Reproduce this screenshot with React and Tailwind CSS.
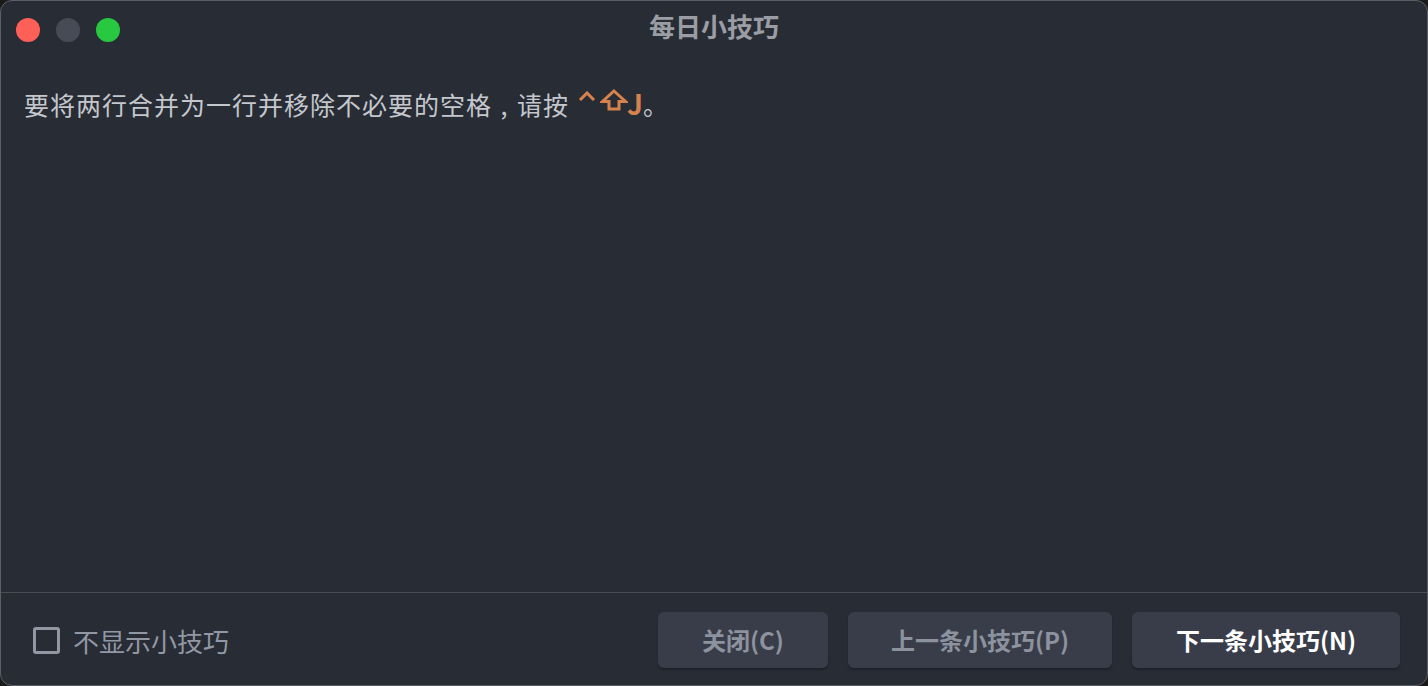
import React, { useState } from 'react';

const cjk = { fontFamily: '"Noto Sans CJK SC", "Noto Sans", sans-serif' };

const TrafficLights = () => (
  <div className="flex items-center gap-4 pt-[3px]">
    <span className="w-6 h-6 rounded-full bg-[#fe5f57]" />
    <span className="w-6 h-6 rounded-full bg-[#474b55]" />
    <span className="w-6 h-6 rounded-full bg-[#28c840]" />
  </div>
);

// ^ control key glyph
const CtrlKey = () => (
  <svg width="18" height="10" viewBox="0 0 18 10" className="inline-block ml-[9px] align-[14px]">
    <path d="M2 9 L9 2 L16 9" fill="none" stroke="#d5824c" strokeWidth="3" strokeLinejoin="miter" />
  </svg>
);

// ⇧ shift key glyph
const ShiftKey = () => (
  <svg width="28" height="22" viewBox="0 0 28 22" className="inline-block ml-[4px] align-[4px]">
    <path
      d="M14 2 L25.5 12.5 L19 12.5 L19 20 L9 20 L9 12.5 L2.5 12.5 Z"
      fill="none"
      stroke="#d5824c"
      strokeWidth="3"
      strokeLinejoin="miter"
    />
  </svg>
);

const FooterButton = ({ children, primary, className }) => (
  <button
    className={
      'h-14 rounded-md bg-[#393d49] shadow-[0_2px_2px_rgba(0,0,0,0.25)] text-[24px] font-bold ' +
      (primary ? 'text-white ' : 'text-[#8c929e] ') +
      className
    }
  >
    {children}
  </button>
);

export default function App() {
  const [hideTips, setHideTips] = useState(false);

  return (
    <div className="w-[1428px] h-[686px] bg-[#1a1a1a]" style={cjk}>
      <div className="w-full h-full flex flex-col rounded-[12px] border border-[#5c5f65] bg-[#282c35] overflow-hidden">
        {/* title bar */}
        <div className="relative h-[55px] flex items-center px-[15px]">
          <TrafficLights />
          <div className="absolute inset-0 flex items-center justify-center pb-[6px] pointer-events-none">
            <span className="text-[26px] font-bold text-[#9a9da3]">每日小技巧</span>
          </div>
        </div>

        {/* tip body */}
        <div className="flex-1 px-[23px] pt-[30px]">
          <p className="text-[25px] tracking-[1px] leading-[34px] text-[#c4c7cc]">
            要将两行合并为一行并移除不必要的空格<span className="inline-block w-[1em] text-center">,</span>请按
            <CtrlKey />
            <ShiftKey />
            <span className="ml-[-1px] text-[28px] font-bold tracking-normal text-[#d5824c]">J</span>。
          </p>
        </div>

        {/* footer */}
        <div className="h-[93px] border-t border-[#4a4d53] flex items-center justify-between pl-[32px] pr-[27px] pt-[2px]">
          <label className="flex items-center gap-[13px] cursor-pointer">
            <span
              onClick={() => setHideTips(!hideTips)}
              className="w-[27px] h-[27px] rounded-[3px] border-[3px] border-[#9198a3]"
            />
            <span className="text-[26px] text-[#9198a3]">不显示小技巧</span>
          </label>
          <div className="flex items-center gap-5">
            <FooterButton className="w-[170px]">关闭(C)</FooterButton>
            <FooterButton className="w-[264px]">上一条小技巧(P)</FooterButton>
            <FooterButton primary className="w-[268px]">下一条小技巧(N)</FooterButton>
          </div>
        </div>
      </div>
    </div>
  );
}
